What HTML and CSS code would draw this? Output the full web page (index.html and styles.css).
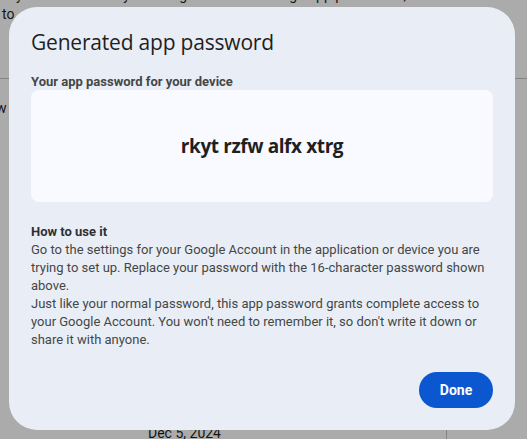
FILE: index.html
```html
<!DOCTYPE html>
<html>
<head>
<meta charset="utf-8">
<link rel="stylesheet" href="styles.css">
</head>
<body>
<div class="page">
  <p class="bg-line bg-top">you can use with your Google Account through app passwords, such as</p>
  <p class="bg-line bg-to">to</p>
  <div class="bg-rule"></div>
  <p class="bg-line bg-w">Yow</p>
  <p class="bg-date">Dec 5, 2024</p>
  <div class="bg-vrule"></div>
</div>
<div class="scrim"></div>
<div class="dialog" role="dialog">
  <h1 class="title">Generated app password</h1>
  <div class="label">Your app password for your device</div>
  <div class="pw-box"><span class="pw">rkyt rzfw alfx xtrg</span></div>
  <div class="howto">
    <div class="howto-title">How to use it</div>
    <p class="howto-text">Go to the settings for your Google Account in the application or device you are trying to set up. Replace your password with the 16-character password shown above.</p>
    <p class="howto-text">Just like your normal password, this app password grants complete access to your Google Account. You won't need to remember it, so don't write it down or share it with anyone.</p>
  </div>
  <div class="actions"><button class="done">Done</button></div>
</div>
</body>
</html>
```
FILE: styles.css
```css
html, body {
  margin: 0;
  padding: 0;
  width: 527px;
  height: 439px;
  overflow: hidden;
  font-family: Roboto, "Liberation Sans", Arial, sans-serif;
}
body {
  background: #ffffff;
  position: relative;
}
.page {
  position: relative;
  width: 527px;
  height: 439px;
}
.bg-line {
  margin: 0;
  font-size: 14px;
  line-height: 20px;
  color: #1f1f1f;
}
.bg-top {
  position: absolute;
  left: 16px;
  top: -15px;
}
.bg-to {
  position: absolute;
  left: 2px;
  top: 4px;
}
.bg-rule {
  position: absolute;
  left: 0;
  top: 78px;
  width: 527px;
  height: 1px;
  background: #c4c7c5;
}
.bg-w {
  position: absolute;
  left: -20px;
  top: 98px;
}
.bg-date {
  position: absolute;
  margin: 0;
  left: 148px;
  top: 423px;
  font-size: 14px;
  line-height: 20px;
  color: #1f1f1f;
}
.bg-vrule {
  position: absolute;
  left: 446px;
  top: 420px;
  width: 1px;
  height: 30px;
  background: #c4c7c5;
}
.scrim {
  position: absolute;
  inset: 0;
  background: rgba(0, 0, 0, 0.33);
}
.dialog {
  position: absolute;
  left: 9px;
  top: 7px;
  width: 506px;
  height: 423px;
  box-sizing: border-box;
  padding: 19px 22px 22px;
  background: #e9eef6;
  border-radius: 28px;
  display: flex;
  flex-direction: column;
}
.title {
  margin: 0 0 15px;
  font-family: "Open Sans", Roboto, sans-serif;
  font-weight: 400;
  font-size: 21px;
  line-height: 32px;
  color: #1f1f1f;
  letter-spacing: -0.2px;
}
.label {
  font-size: 13px;
  line-height: 17px;
  font-weight: 700;
  color: #444746;
}
.pw-box {
  margin-top: 0;
  height: 112px;
  background: #f8faff;
  border-radius: 8px;
  display: flex;
  align-items: center;
  justify-content: center;
}
.pw {
  font-family: "Open Sans", Roboto, sans-serif;
  font-weight: 700;
  font-size: 19px;
  color: #1f1f1f;
  letter-spacing: -0.4px;
}
.howto {
  margin-top: 21px;
  font-size: 13px;
  line-height: 18px;
  color: #444746;
}
.howto-title {
  font-weight: 700;
  color: #303030;
}
.howto-text {
  margin: 0;
}
.actions {
  margin-top: auto;
  display: flex;
  justify-content: flex-end;
}
.done {
  width: 74px;
  height: 36px;
  border: none;
  border-radius: 18px;
  background: #0b57d0;
  color: #ffffff;
  font-family: Roboto, "Liberation Sans", sans-serif;
  font-weight: 700;
  font-size: 14px;
  padding: 0;
}
```
